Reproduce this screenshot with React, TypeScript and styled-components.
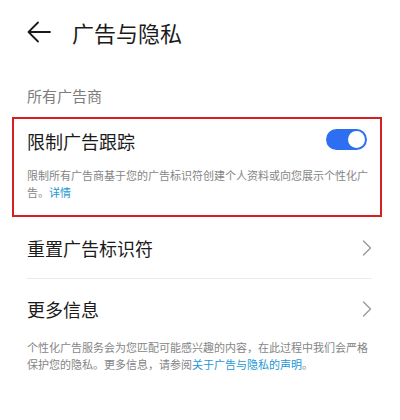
import styled, { createGlobalStyle } from "styled-components";

const GlobalStyle = createGlobalStyle`
  body {
    margin: 0;
    background: #ffffff;
    font-family: "Noto Sans CJK SC", "Noto Sans", sans-serif;
    color: #1b1b1b;
  }
`;

const Page = styled.div`
  width: 400px;
  height: 420px;
  background: #ffffff;
  overflow: hidden;
`;

const Header = styled.div`
  height: 64px;
  display: flex;
  align-items: center;
  padding-left: 27px;
  gap: 21px;
`;

const Title = styled.div`
  font-size: 22px;
  line-height: 28px;
  color: #1b1b1b;
`;

const SectionLabel = styled.div`
  margin-top: 22px;
  padding-left: 27px;
  font-size: 15px;
  line-height: 20px;
  color: #7d7d7d;
`;

const Highlight = styled.div`
  margin: 11px 18px 0 12px;
  border: 2px solid #d71f1f;
  padding: 9px 13px 14px 13px;
`;

const SwitchRow = styled.div`
  display: flex;
  align-items: center;
  justify-content: space-between;
  height: 26px;
`;

const RowTitle = styled.div`
  font-size: 18px;
  line-height: 24px;
  color: #1b1b1b;
`;

const Toggle = styled.div<{ $on: boolean }>`
  width: 41px;
  height: 21px;
  border-radius: 11px;
  background: ${(p) => (p.$on ? "#2d6ff0" : "#cccccc")};
  display: flex;
  align-items: center;
  justify-content: ${(p) => (p.$on ? "flex-end" : "flex-start")};
  padding: 0 2px;
  box-sizing: border-box;
  margin-top: -4px;
`;

const Knob = styled.div`
  width: 17px;
  height: 17px;
  border-radius: 50%;
  background: #ffffff;
`;

const Note = styled.p<{ $indent?: number }>`
  margin: 0;
  font-size: 11px;
  line-height: 17px;
  color: #858585;
  padding-left: ${(p) => p.$indent ?? 0}px;
  padding-right: ${(p) => p.$indent ?? 0}px;
`;

const Desc = styled(Note)`
  margin: 13px -7px 0 0;
`;

const Link = styled.span`
  color: #1d97d6;
`;

const ListRow = styled.div<{ $h: number }>`
  height: ${(p) => p.$h}px;
  display: flex;
  align-items: center;
  justify-content: space-between;
  padding: 0 28px 0 27px;
`;

const Divider = styled.div`
  height: 1px;
  background: #ebebeb;
  margin: 0 28px 0 27px;
`;

const Back = () => (
  <svg width="24" height="24" viewBox="0 0 24 24" fill="none">
    <path
      d="M23 12H2M11 2.5L1.5 12L11 21.5"
      stroke="#1b1b1b"
      strokeWidth="1.8"
      strokeLinecap="round"
      strokeLinejoin="round"
    />
  </svg>
);

const Chevron = () => (
  <svg width="10" height="16" viewBox="0 0 10 16" fill="none">
    <path
      d="M1.5 1L8.5 8L1.5 15"
      stroke="#9a9a9a"
      strokeWidth="1.4"
      strokeLinecap="round"
      strokeLinejoin="round"
    />
  </svg>
);

export default function App() {
  return (
    <Page>
      <GlobalStyle />
      <Header>
        <Back />
        <Title>广告与隐私</Title>
      </Header>
      <SectionLabel>所有广告商</SectionLabel>
      <Highlight>
        <SwitchRow>
          <RowTitle>限制广告跟踪</RowTitle>
          <Toggle $on>
            <Knob />
          </Toggle>
        </SwitchRow>
        <Desc>
          限制所有广告商基于您的广告标识符创建个人资料或向您展示个性化广告。<Link>详情</Link>
        </Desc>
      </Highlight>
      <ListRow $h={61}>
        <RowTitle>重置广告标识符</RowTitle>
        <Chevron />
      </ListRow>
      <Divider />
      <ListRow $h={60}>
        <RowTitle>更多信息</RowTitle>
        <Chevron />
      </ListRow>
      <Note $indent={27}>
        个性化广告服务会为您匹配可能感兴趣的内容，在此过程中我们会严格保护您的隐私。更多信息，请参阅
        <Link>关于广告与隐私的声明</Link>。
      </Note>
    </Page>
  );
}
